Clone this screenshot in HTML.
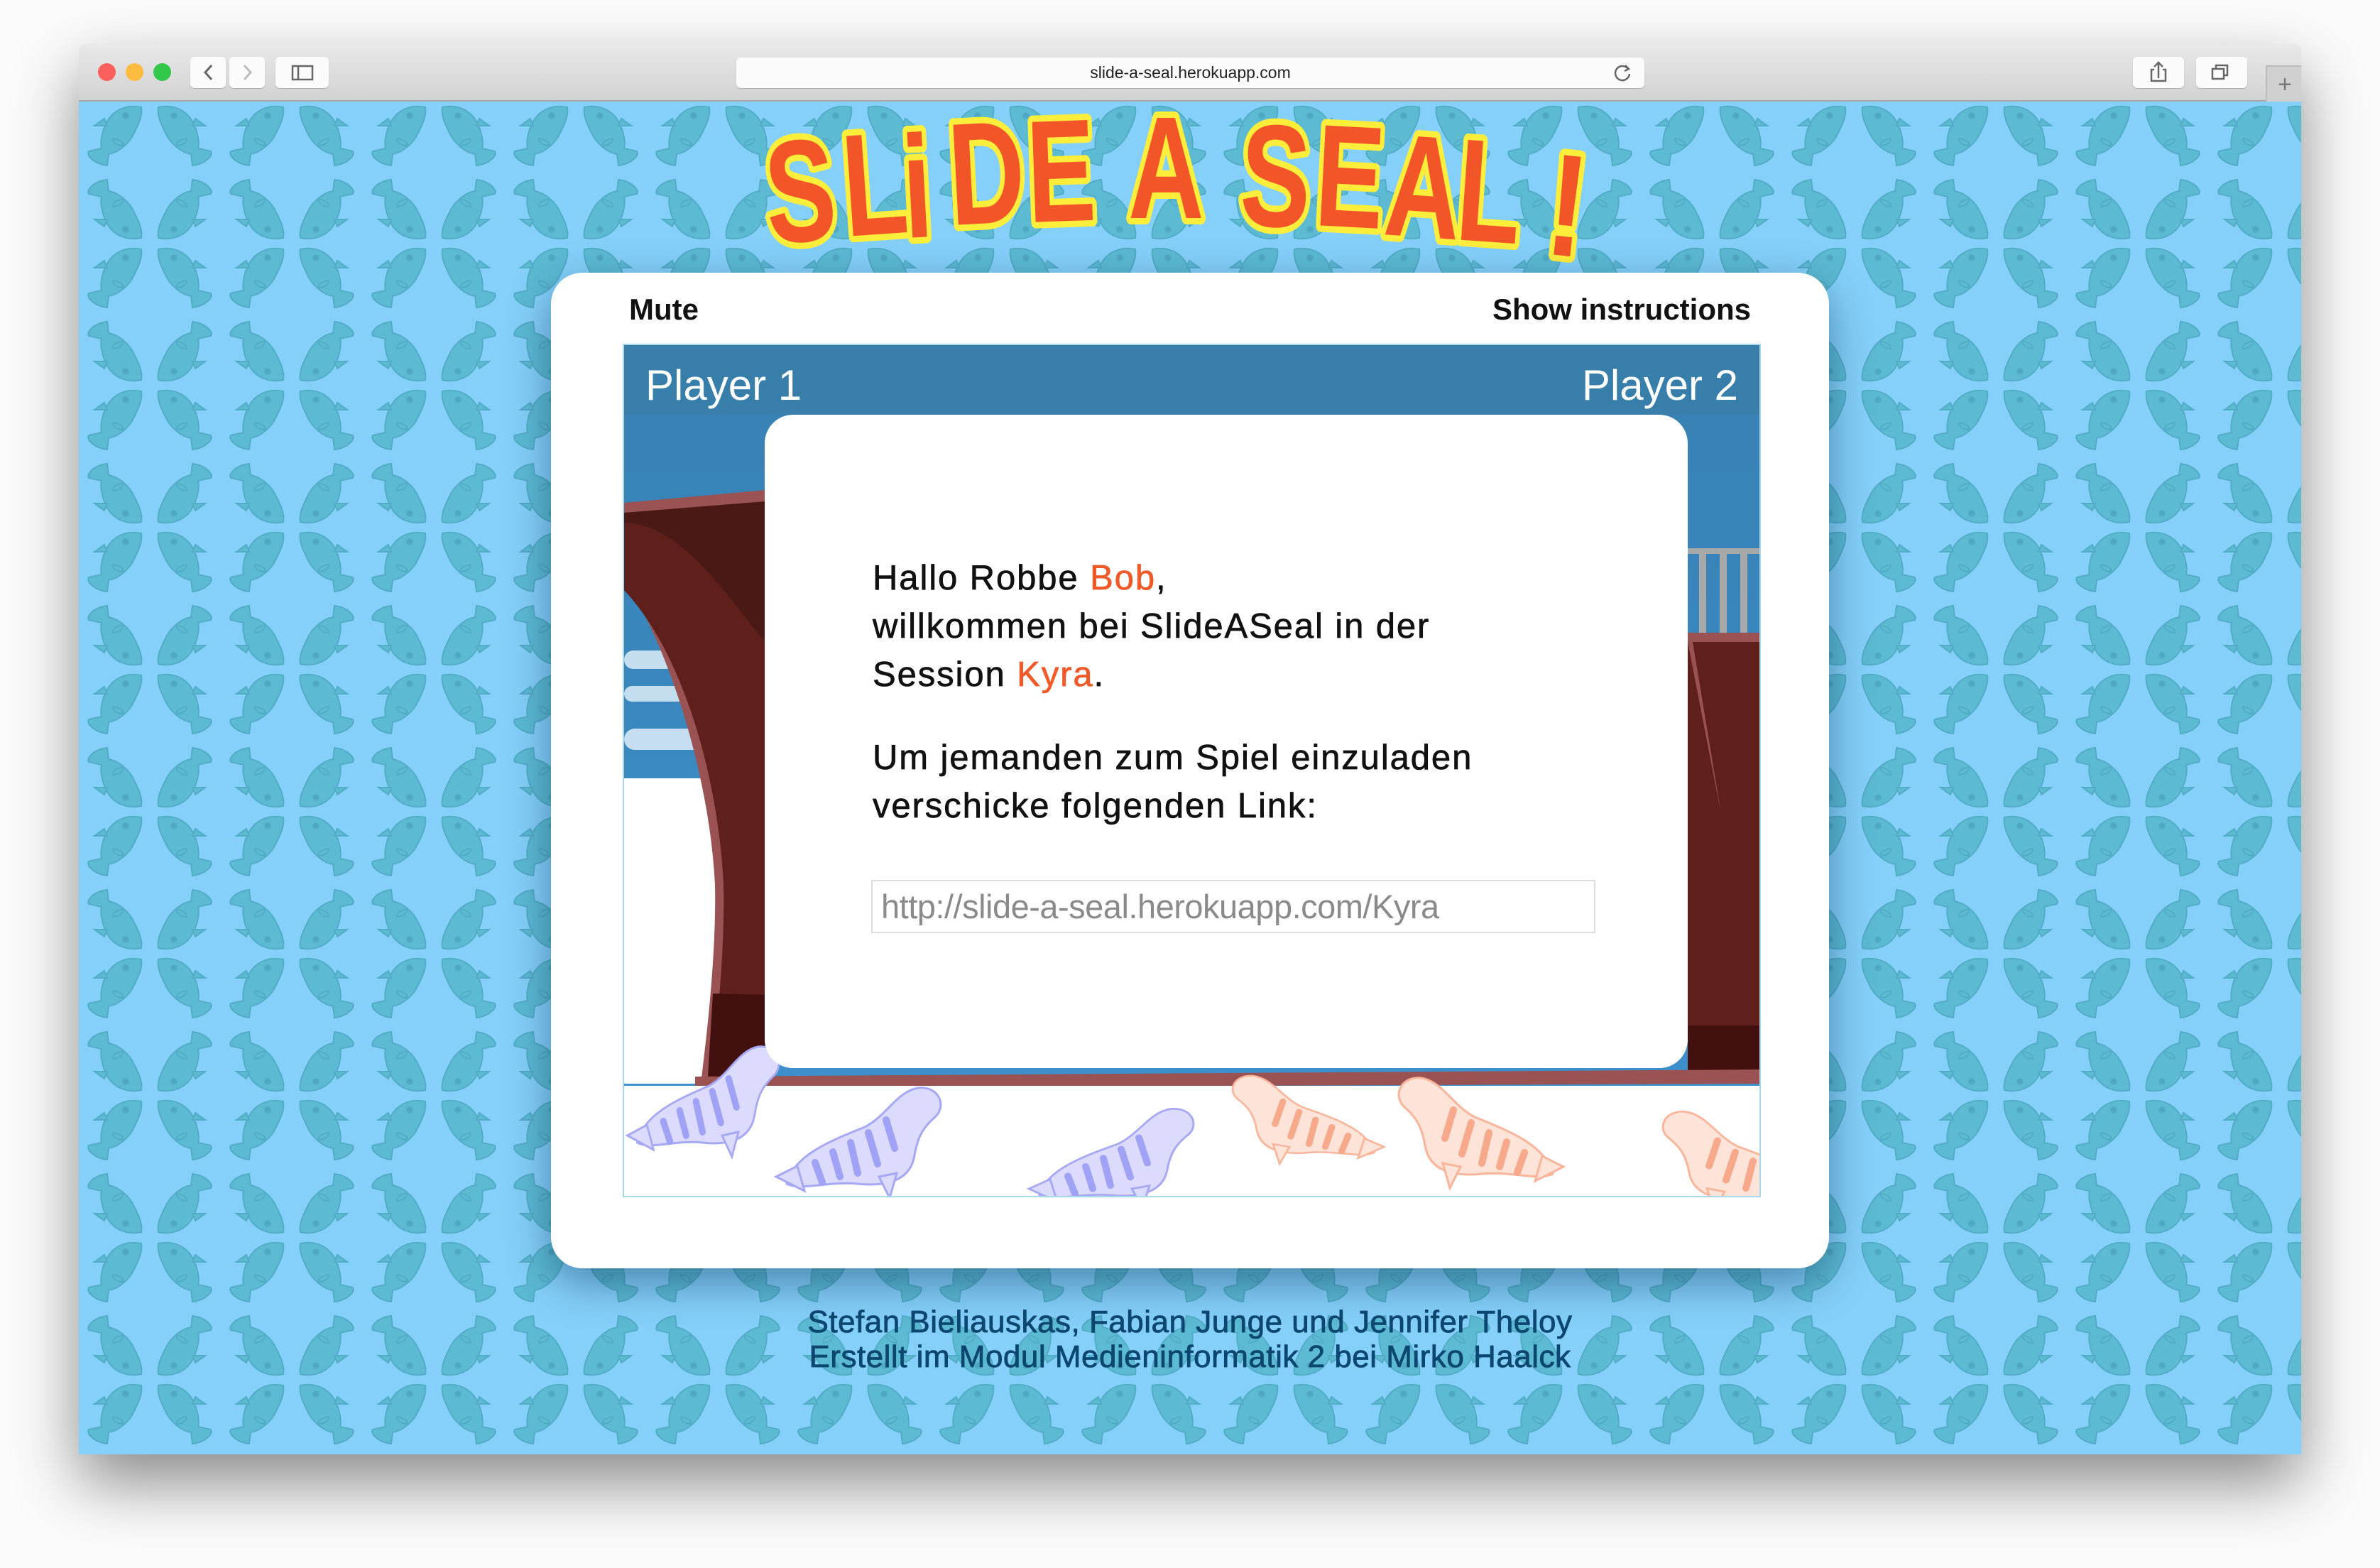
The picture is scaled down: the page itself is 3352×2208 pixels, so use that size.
<!DOCTYPE html>
<html><head><meta charset="utf-8">
<style>
html,body{margin:0;padding:0;width:3352px;height:2208px;overflow:hidden;background:#fbfbfb;font-family:"Liberation Sans",sans-serif}
#win{position:absolute;left:111px;top:62px;width:3130px;height:1986px;box-shadow:0 40px 90px rgba(0,0,0,.45);border-radius:10px 10px 0 0;overflow:hidden}
#bar{position:absolute;left:0;top:0;width:100%;height:79px;background:linear-gradient(#e9e9e9,#d2d2d2);border-bottom:2px solid #a9a9a9}
.dot{position:absolute;top:27px;width:25px;height:25px;border-radius:50%}
.btn{position:absolute;top:18px;height:44px;background:#fbfbfb;border-radius:6px;box-shadow:0 1px 1px #aaa}
#url{position:absolute;left:926px;top:19px;width:1279px;height:43px;background:#fbfbfb;border-radius:6px;box-shadow:0 1px 1px #aaa;font-size:23px;text-align:center;line-height:43px;color:#222}
#page{position:absolute;left:0;top:81px;width:3130px;height:1905px;background:#84d0fa}
#card{position:absolute;left:665px;top:241px;width:1800px;height:1402px;background:#fff;border-radius:44px;box-shadow:0 20px 60px rgba(0,40,80,.45)}
.lnk{position:absolute;top:28px;font-size:42px;font-weight:bold;color:#111}
#game{position:absolute;left:101px;top:100px;width:1603px;height:1202px;border:2px solid #a8d8ea;box-sizing:border-box;overflow:hidden}
#modal{position:absolute;left:198px;top:98px;width:1300px;height:920px;background:#fff;border-radius:40px}
.p{position:absolute;left:152px;font-size:49px;line-height:68px;color:#111;letter-spacing:1.9px;white-space:nowrap;-webkit-text-stroke:0.7px #111}
.o{color:#f05a28;-webkit-text-stroke:0.7px #f05a28}
#inp{position:absolute;left:150px;top:655px;width:1020px;height:75px;border:2px solid #ddd;box-sizing:border-box;font-size:47px;color:#8a8a8a;line-height:71px;padding-left:12px;letter-spacing:-0.5px}
.pl{position:absolute;top:22px;font-size:60px;color:#fff}
#foot{position:absolute;left:0;width:3130px;top:1694px;text-align:center;font-size:44px;line-height:49px;color:#0c4770;letter-spacing:0.5px;-webkit-text-stroke:0.8px #0c4770}
</style></head><body>
<div id="win">
<div id="bar">
<div class="dot" style="left:27px;background:#fc605c"></div>
<div class="dot" style="left:66px;background:#fdbc40"></div>
<div class="dot" style="left:105px;background:#34c84a"></div>
<div class="btn" style="left:157px;width:50px"></div>
<div class="btn" style="left:212px;width:50px"></div>
<div class="btn" style="left:277px;width:75px"></div>
<svg style="position:absolute;left:157px;top:18px" width="200" height="44"><path d="M30 12 L21 22 L30 32" stroke="#666" stroke-width="3" fill="none"/><path d="M76 12 L85 22 L76 32" stroke="#bbb" stroke-width="3" fill="none"/><rect x="144" y="13" width="28" height="19" stroke="#666" stroke-width="2.5" fill="none"/><line x1="152" y1="13" x2="152" y2="32" stroke="#666" stroke-width="2.5"/></svg>
<div id="url">slide-a-seal.herokuapp.com</div>
<svg style="position:absolute;left:2160px;top:26px" width="30" height="30"><path d="M22 9 A10 10 0 1 0 24 16" stroke="#666" stroke-width="2.5" fill="none"/><path d="M18 4 L23 9 L17 12" stroke="#666" stroke-width="2.5" fill="none"/></svg>
<div class="btn" style="left:2893px;width:72px"></div>
<div class="btn" style="left:2982px;width:72px"></div>
<svg style="position:absolute;left:2893px;top:18px" width="170" height="44"><path d="M30 18 h-4 v16 h20 v-16 h-4 M36 30 V8 M30 14 l6-6 6 6" stroke="#666" stroke-width="2.5" fill="none"/><rect x="112" y="17" width="16" height="14" stroke="#666" stroke-width="2.5" fill="none"/><path d="M117 17 v-5 h16 v14 h-5" stroke="#666" stroke-width="2.5" fill="none"/></svg>
<div style="position:absolute;left:3080px;top:30px;width:50px;height:49px;background:#d0d0d0;border-left:2px solid #bbb;border-top:2px solid #bbb;font-size:34px;color:#777;text-align:center;line-height:50px">+</div>
</div>
<div id="page">
<svg width="3130" height="1905" style="position:absolute;left:0;top:0">
<defs>
<g id="fish" fill="#5cbad3" stroke="#52acc6" stroke-width="2">
<path d="M88 8 C70 4 50 10 40 28 C32 42 30 58 32 66 L14 70 C10 76 22 88 40 90 L42 74 C56 72 72 58 78 44 C84 32 90 20 88 8 Z"/>
<path d="M36 24 L22 34 L40 34 Z"/>
<path d="M48 52 C56 52 64 58 62 62 C54 62 48 58 48 52 Z"/>
<circle cx="66" cy="20" r="4" fill="#4ea8c3"/>
</g>
<pattern id="pt" x="0" y="0" width="200" height="200" patternUnits="userSpaceOnUse">
<use href="#fish" x="0" y="0"/>
<use href="#fish" transform="translate(200,0) scale(-1,1)"/>
<use href="#fish" transform="translate(0,200) scale(1,-1)"/>
<use href="#fish" transform="translate(200,200) scale(-1,-1)"/>
</pattern>
</defs>
<rect width="3130" height="1905" fill="url(#pt)"/>
<g font-family="Liberation Sans, sans-serif" font-weight="bold" font-size="205" fill="#f25628" stroke="#fdee3c" stroke-width="18" stroke-linejoin="round" paint-order="stroke">
<text transform="translate(972,200) rotate(-4) scale(0.72,1)">S</text>
<text transform="translate(1081,190) rotate(-4) scale(0.72,1)">L</text>
<text transform="translate(1164,192) rotate(-3) scale(0.72,1)">i</text>
<text transform="translate(1229,174) rotate(-3) scale(0.72,1)">D</text>
<text transform="translate(1338,170) rotate(-2) scale(0.7,1)">E</text>
<text transform="translate(1478,164) rotate(0) scale(0.72,1)">A</text>
<text transform="translate(1634,174) rotate(2) scale(0.72,1)">S</text>
<text transform="translate(1739,174) rotate(3) scale(0.7,1)">E</text>
<text transform="translate(1836,187) rotate(4) scale(0.72,1)">A</text>
<text transform="translate(1937,194) rotate(4) scale(0.72,1)">L</text>
<text transform="translate(2062,214) rotate(6) scale(0.8,1)">!</text>
</g>
</svg>
<div id="card">
<div class="lnk" style="left:110px">Mute</div>
<div class="lnk" style="right:110px">Show instructions</div>
<div id="game">
<svg width="1603" height="1202" style="position:absolute;left:0;top:0">
<defs>
<linearGradient id="sky" x1="0" y1="0" x2="0" y2="1"><stop offset="0" stop-color="#3780b3"/><stop offset="1" stop-color="#3d92cf"/></linearGradient>
<g id="seal">
<path d="M20 150 C30 110 80 90 130 70 C160 55 175 20 205 15 C235 12 245 40 230 55 C215 68 205 80 200 110 C195 140 170 155 120 150 C80 146 40 160 20 150 Z"/>
<path d="M5 140 L35 125 L45 160 Z"/>
<path d="M150 140 L175 135 L165 170 Z"/>
</g>
<g id="stripes" stroke-width="10" fill="none" stroke-linecap="round">
<path d="M60 120 L70 148 M85 105 L95 140 M110 92 L120 135 M135 78 L148 122 M160 60 L172 100"/>
</g>
</defs>
<rect width="1603" height="1202" fill="url(#sky)"/>
<rect width="1603" height="98" fill="#377eab"/>
<g fill="#e8f4fc" opacity=".8"><rect x="0" y="430" width="110" height="26" rx="13"/><rect x="0" y="480" width="90" height="22" rx="11"/><rect x="0" y="540" width="120" height="30" rx="15"/></g>
<rect x="0" y="610" width="200" height="430" fill="#fff"/>
<path d="M0 222 L200 204 L200 1040 L108 1040 C118 960 130 850 128 760 C120 600 60 420 0 330 Z" fill="#9a5252"/>
<path d="M0 236 L200 220 L200 1030 L122 1030 C132 950 142 850 140 760 C132 600 80 430 0 345 Z" fill="#5f201c"/>
<path d="M0 236 L200 220 L200 420 C150 360 80 250 0 250 Z" fill="#4b1915"/>
<path d="M125 913 L200 915 L200 1030 L118 1030 Z" fill="#431010"/>
<g fill="#a8a8a8"><rect x="1498" y="286" width="105" height="8"/><rect x="1514" y="292" width="10" height="120"/><rect x="1543" y="292" width="10" height="120"/><rect x="1572" y="292" width="10" height="120"/></g>
<rect x="1498" y="405" width="105" height="630" fill="#9a5252"/>
<rect x="1498" y="418" width="105" height="615" fill="#5f201c"/>
<path d="M1498 418 L1505 418 L1545 660 Z" fill="#9a5252"/>
<rect x="1498" y="958" width="105" height="70" fill="#431010"/>
<path d="M100 1030 L1603 1020 L1603 1040 L100 1046 Z" fill="#9a5252"/>
<rect x="0" y="1043" width="1603" height="160" fill="#fff"/>
<g fill="#dcdbfd" stroke="#a6a8f5" stroke-width="3">
<g transform="translate(0,973) scale(0.92,1)"><use href="#seal"/><use href="#stripes" stroke="#9fa2f5"/></g>
<g transform="translate(209,1031)"><use href="#seal"/><use href="#stripes" stroke="#9fa2f5"/></g>
<g transform="translate(565,1062) scale(1,0.9)"><use href="#seal"/><use href="#stripes" stroke="#9fa2f5"/></g>
</g>
<g fill="#fde3d8" stroke="#f9b49a" stroke-width="3">
<g transform="translate(1075,1017) scale(-0.92,0.8)"><use href="#seal"/><use href="#stripes" stroke="#f7a98c"/></g>
<g transform="translate(1328,1017) scale(-1,1)"><use href="#seal"/><use href="#stripes" stroke="#f7a98c"/></g>
<g transform="translate(1700,1066) scale(-1,0.9)"><use href="#seal"/><use href="#stripes" stroke="#f7a98c"/></g>
</g>
</svg>
<div class="pl" style="left:30px">Player 1</div>
<div class="pl" style="right:30px">Player 2</div>
<div id="modal">
<div class="p" style="top:196px">Hallo Robbe <span class="o">Bob</span>,<br>willkommen bei SlideASeal in der<br>Session <span class="o">Kyra</span>.</div>
<div class="p" style="top:449px">Um jemanden zum Spiel einzuladen<br>verschicke folgenden Link:</div>
<div id="inp">http://slide-a-seal.herokuapp.com/Kyra</div>
</div>
</div>
</div>
<div id="foot">Stefan Bieliauskas, Fabian Junge und Jennifer Theloy<br>Erstellt im Modul Medieninformatik 2 bei Mirko Haalck</div>
</div>
</div>
</body></html>
